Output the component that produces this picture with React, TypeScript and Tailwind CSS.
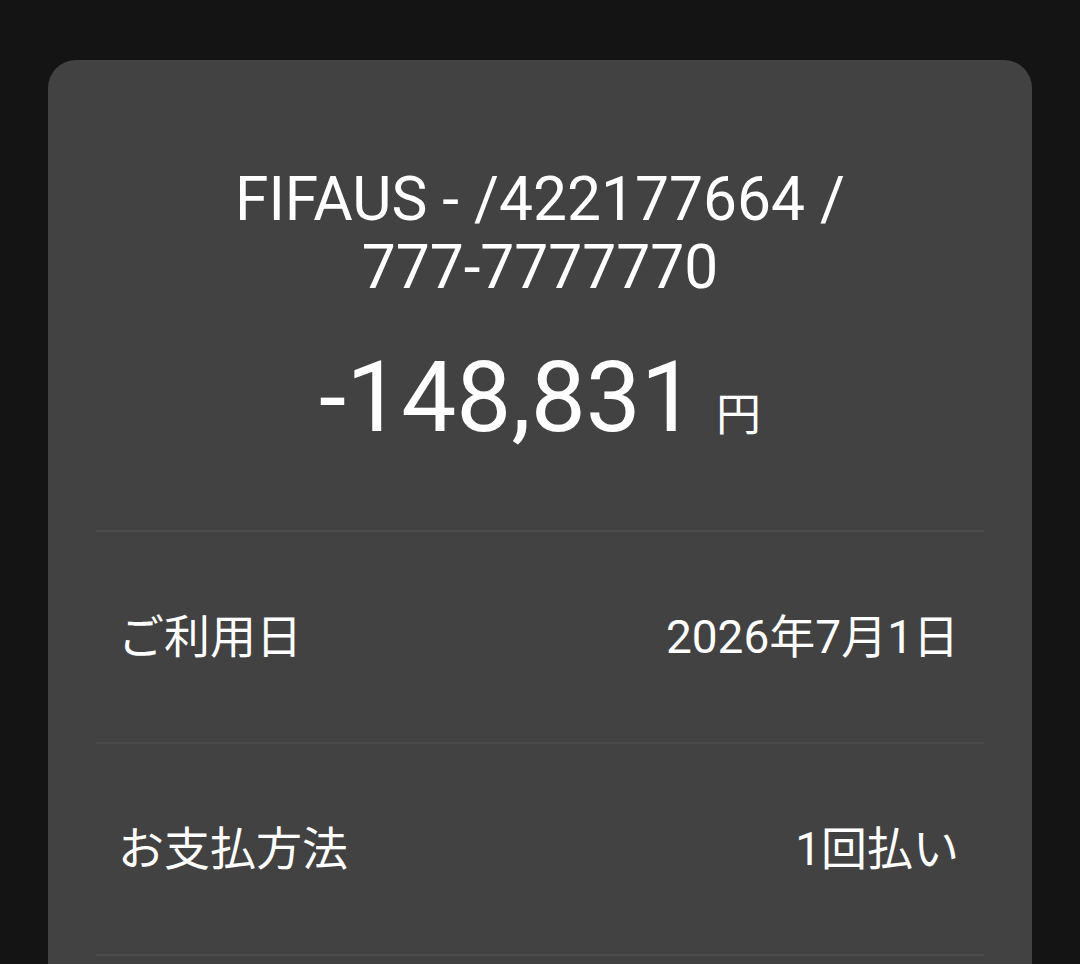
import React from "react";

type Row = {
  label: string;
  value: string;
};

const rows: Row[] = [
  { label: "ご利用日", value: "2026年7月1日" },
  { label: "お支払方法", value: "1回払い" },
];

const font = { fontFamily: 'Roboto, "Noto Sans CJK JP", sans-serif' };

const Divider = () => <div className="h-[2px] w-full bg-[#4c4c4c]" />;

const App = () => {
  return (
    <div
      className="h-[964px] w-[1080px] overflow-hidden bg-[#141414] px-[48px] pt-[60px]"
      style={font}
    >
      <div className="min-h-[1100px] rounded-[28px] bg-[#424242] px-[48px] pt-[106px] text-white">
        <h1 className="text-center text-[60.5px] leading-[68px] font-normal">
          FIFAUS - /422177664 /
          <br />
          777-7777770
        </h1>
        <div className="mt-[37px] flex items-baseline justify-center">
          <span className="text-[98px] leading-[118px]">-148,831</span>
          <span className="ml-[20px] text-[45px]">円</span>
        </div>
        <div className="mt-[73px]">
          <Divider />
          {rows.map((row) => (
            <div key={row.label}>
              <div className="flex h-[210px] items-center justify-between pl-[22px] pr-[25px] text-[46px]">
                <span>{row.label}</span>
                <span>{row.value}</span>
              </div>
              <Divider />
            </div>
          ))}
        </div>
      </div>
    </div>
  );
};

export default App;
